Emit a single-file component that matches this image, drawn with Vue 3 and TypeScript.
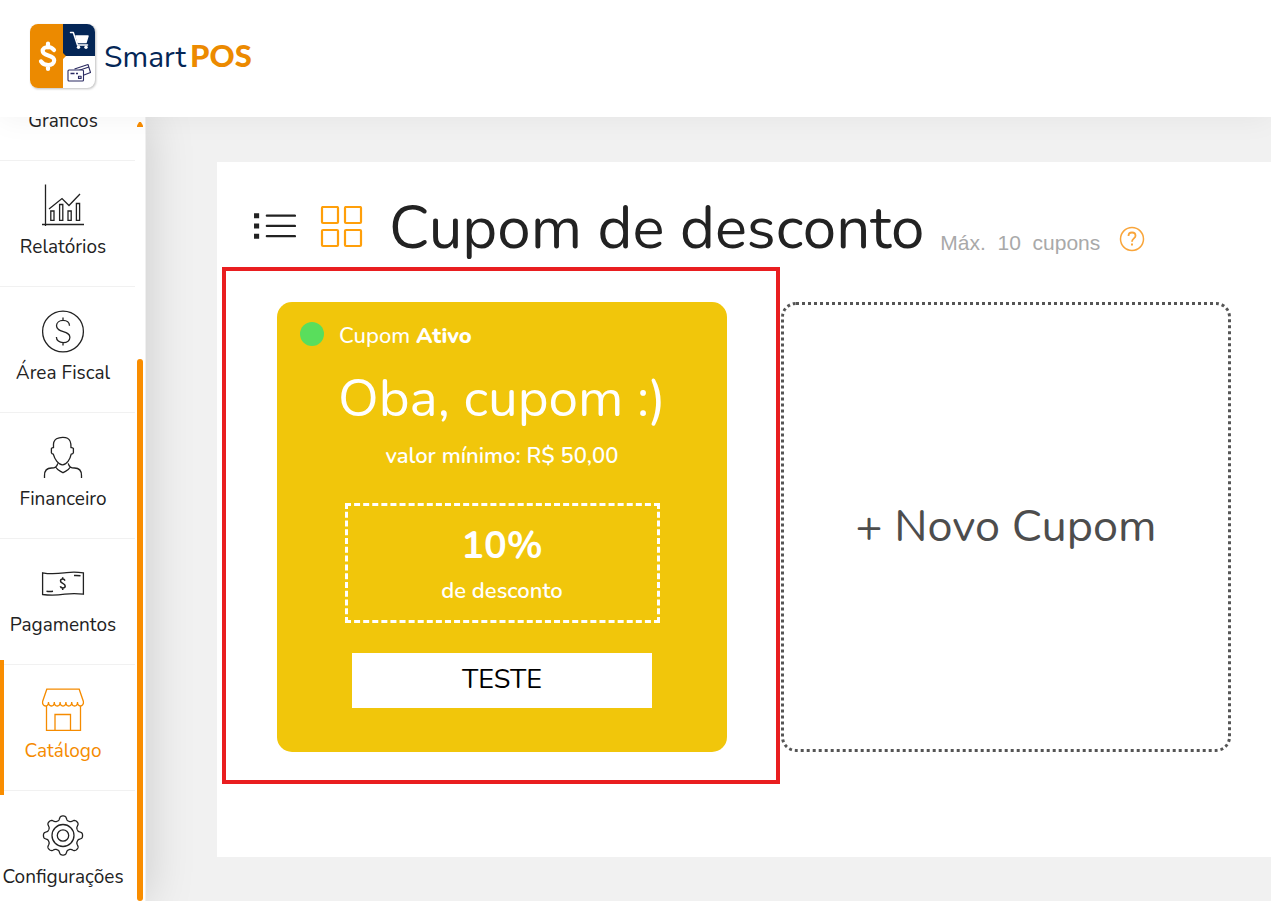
<script setup lang="ts">
import { ref } from 'vue'

interface MenuItem {
  id: string
  label: string
}

const menu: MenuItem[] = [
  { id: 'graficos', label: 'Gráficos' },
  { id: 'relatorios', label: 'Relatórios' },
  { id: 'fiscal', label: 'Área Fiscal' },
  { id: 'financeiro', label: 'Financeiro' },
  { id: 'pagamentos', label: 'Pagamentos' },
  { id: 'catalogo', label: 'Catálogo' },
  { id: 'config', label: 'Configurações' },
]

const active = ref('catalogo')
const view = ref<'list' | 'grid'>('grid')

const coupon = {
  title: 'Oba, cupom :)',
  minimum: 'valor mínimo: R$ 50,00',
  discount: '10%',
  code: 'TESTE',
}

// Eight rounded teeth around the centre of a 42-unit icon box.
function gearOutline(): string {
  const points: string[] = []
  for (let i = 0; i < 240; i++) {
    const a = (i / 240) * Math.PI * 2
    const r = 17.5 + 2.2 * Math.tanh(1.7 * Math.cos(8 * a))
    points.push(`${(21 + r * Math.cos(a)).toFixed(2)} ${(21.5 + r * Math.sin(a)).toFixed(2)}`)
  }
  return `M${points.join('L')}Z`
}
const gear = gearOutline()
</script>

<template>
  <div class="app">
    <header class="topbar">
      <a class="brand" href="#" aria-label="SmartPOS">
        <svg class="brand-mark" viewBox="0 0 66 66" aria-hidden="true">
          <defs>
            <clipPath id="mark"><rect width="65" height="64" rx="8" /></clipPath>
          </defs>
          <g clip-path="url(#mark)">
            <rect width="66" height="65" fill="#fff" />
            <rect x="33" width="33" height="32" fill="#042656" />
            <path d="M0 0h33v29l3 3-3 3v30H0z" fill="#ec8a00" />
          </g>
          <path d="M24 26c-1.500-2-3.800-3-6-3-3.200 0-5.300 1.600-5.300 4 0 5.600 11.500 3.200 11.500 9.300 0 2.900-2.500 4.700-6 4.700-3 0-5.700-1.200-7.200-3.600M18 19.500v4M18 41v4" fill="none" stroke="#fff" stroke-width="4.200" stroke-linecap="round" />
          <g fill="none" stroke="#fff" stroke-width="1.500" stroke-linecap="round" stroke-linejoin="round">
            <path d="M40.500 8.500h2.800l4.200 12.500h10" />
            <path d="M46 12h12l-2 6.500h-8z" fill="#fff" />
          </g>
          <circle cx="48.500" cy="23.300" r="1.700" fill="#fff" />
          <circle cx="56" cy="23.300" r="1.700" fill="#fff" />
          <g fill="none" stroke="#2b2b62" stroke-width="1.100" stroke-linejoin="round">
            <path d="M44.500 45l13.500-4.500 2.500 8-6.500 2.500" />
            <path d="M45.500 47.500l13.500-4.500" />
            <rect x="38" y="46" width="15.500" height="11" rx="1" fill="#fff" />
            <path d="M40.500 49.500h4M46 49.500h2" stroke-width="1.300" />
            <rect x="48.500" y="52.200" width="2.600" height="2.200" />
          </g>
        </svg>
        <span class="brand-name">Smart<b>POS</b></span>
      </a>
    </header>

    <div class="body">
      <aside class="sidebar">
        <nav class="menu" aria-label="Menu principal">
          <a
            v-for="item in menu"
            :key="item.id"
            href="#"
            class="menu-item"
            :class="{ active: item.id === active }"
            @click.prevent="active = item.id"
          >
            <svg class="menu-icon" viewBox="0 0 42 42" aria-hidden="true">
              <g v-if="item.id === 'graficos'">
                <circle cx="21" cy="21" r="20" />
                <path d="M21 1v20h20" />
              </g>
              <g v-else-if="item.id === 'relatorios'">
                <path d="M3.500 .5v41.500M0 40.500h42M7 25l13-10.500 7 7L38 10" />
                <path d="M8.800 27h3.200v9.300H8.800zM17.600 20.500h3.200v15.800h-3.200zM26 27h3.200v9.300H26zM34.400 19.500h3.200v16.800h-3.200z" />
              </g>
              <g v-else-if="item.id === 'fiscal'">
                <circle cx="21" cy="21.500" r="20.400" />
                <path d="M27.500 15.800c0-3.300-2.700-5.400-6.400-5.400s-6.600 2.200-6.600 5.400c0 7.400 13.400 4.200 13.400 11.400 0 3.300-2.800 5.400-6.700 5.400s-6.800-2.200-6.800-5.600M21 7.500v3M21 32.500v3" />
              </g>
              <g v-else-if="item.id === 'financeiro'">
                <path d="M11.500 11.500c-.5-5 .3-7.200 3-8.700 3.500-2 9-1.700 11-.6 3.200 1.700 3.700 4.600 3.500 9.300.9.200 2 .1 2.400 1v4.200c-.4 1-1.300 1.300-2.200 1.500-1 5-4.600 10.600-8.700 10.600S12.600 23.200 11.300 18.200c-.9-.2-1.500-.5-1.900-1.500v-4.200c.4-.9 1.200-.8 2.100-1z" />
                <path d="M2.500 42v-2.500c0-4.700 2.800-7.500 7-7.500 3.300 0 5.500-1.200 6.300-4.700M39.500 42v-2.500c0-4.700-2.800-7.500-7-7.500-3.300 0-5.500-1.200-6.300-4.700M14 31.500c1.500 2.800 4 3.300 7 5.200 3-1.900 5.500-2.400 7-5.200" />
              </g>
              <g v-else-if="item.id === 'pagamentos'">
                <path d="M.6 10.800c10 2 18 .5 24-.2 6-.7 12-.4 16.800.2v21.400c-7-1-13-.8-18.500 0-7 1-14 1.500-22.300.3z" />
                <path d="M23 18.600c-.4-1-1.200-1.500-2.300-1.500-1.300 0-2.200.7-2.200 1.900 0 2.800 4.700 1.900 4.700 4.900 0 1.300-1 2-2.400 2-1.200 0-2.200-.6-2.500-1.700M20.700 15.200v1.900M20.700 26v2M32 13.500c2-.2 4.500 0 6.500.3M4.500 29.300c2 .3 4.500.3 6.500 0" stroke-width="1.500" />
              </g>
              <g v-else-if="item.id === 'catalogo'">
                <path d="M4.800 1.200h32.400l4.200 12.300c.4 2.500-1 4.500-3 4.500-1.800 0-3-1.500-2.900-4 0 2.500-1 4-2.900 4s-2.900-1.500-2.900-4c0 2.500-1 4-2.900 4s-2.900-1.500-2.900-4c0 2.500-1 4-2.900 4s-2.900-1.500-2.900-4c0 2.500-1 4-2.900 4s-2.900-1.500-2.900-4c0 2.500-1 4-2.900 4s-2.900-1.500-2.900-4c0 2.500-1.200 4-3 4-2 0-3.300-2-2.900-4.500z" />
                <path d="M4.500 18v24.300h34V18M13 42V26.500h15.500V42" />
              </g>
              <g v-else>
                <path :d="gear" />
                <circle cx="21" cy="21.500" r="11" />
                <circle cx="21" cy="21.500" r="5.700" />
              </g>
            </svg>
            <span class="menu-label">{{ item.label }}</span>
          </a>
        </nav>
        <div class="scrollbar" aria-hidden="true">
          <span class="scroll-up"></span>
          <span class="scroll-thumb"></span>
        </div>
      </aside>

      <main class="content">
        <section class="panel">
          <div class="heading">
            <button type="button" class="view-button" aria-label="Ver em lista" @click="view = 'list'">
              <svg viewBox="0 0 42 42" aria-hidden="true">
                <path d="M1 7h5v5H1zM1 17h5v5H1zM1 27h5v5H1z" fill="#222" />
                <path d="M13.500 9.500h27.500M13.500 19.500h27.500M13.500 29.500h27.500" fill="none" stroke="#222" stroke-width="2.200" stroke-linecap="round" />
              </svg>
            </button>
            <button type="button" class="view-button" aria-label="Ver em grade" @click="view = 'grid'">
              <svg viewBox="0 0 43 43" aria-hidden="true">
                <g fill="none" stroke="#ff9f0a" stroke-width="2.200">
                  <rect x="2" y="1" width="16" height="16" rx="1" />
                  <rect x="25" y="1" width="16" height="16" rx="1" />
                  <rect x="2" y="24" width="16" height="16" rx="1" />
                  <rect x="25" y="24" width="16" height="16" rx="1" />
                </g>
              </svg>
            </button>
            <h1>Cupom de desconto</h1>
            <span class="limit">Máx.&nbsp; 10&nbsp; cupons</span>
            <button type="button" class="help" aria-label="Ajuda">
              <svg viewBox="0 0 26 26" aria-hidden="true">
                <circle cx="13" cy="13" r="11.500" />
                <path d="M9.500 10c0-2.200 1.500-3.500 3.500-3.500s3.500 1.300 3.500 3.200c0 2.600-3.500 2.800-3.500 6" stroke-width="1.800" />
                <path d="M13 17.500v2" stroke-width="2" />
              </svg>
            </button>
          </div>

          <div class="cards">
            <article class="coupon">
              <p class="status"><span class="dot"></span><span>Cupom <b>Ativo</b></span></p>
              <h2>{{ coupon.title }}</h2>
              <p class="minimum">{{ coupon.minimum }}</p>
              <div class="discount">
                <strong>{{ coupon.discount }}</strong>
                <span>de desconto</span>
              </div>
              <div class="code">{{ coupon.code }}</div>
            </article>
            <button type="button" class="new-coupon">+ Novo Cupom</button>
          </div>
        </section>
      </main>
    </div>
  </div>
</template>

<style>
body {
  margin: 0;
}
</style>

<style scoped>
.app {
  display: flex;
  flex-direction: column;
  height: 100vh;
  overflow: hidden;
  background: #f1f1f1;
  color: #222;
  font-family: Nunito, Lato, sans-serif;
}

h1,
h2,
p {
  margin: 0;
  font-weight: 400;
}

button {
  padding: 0;
  border: 0;
  background: none;
  font-family: inherit;
  cursor: pointer;
}

.topbar {
  position: relative;
  z-index: 2;
  display: flex;
  flex: none;
  height: 117px;
  box-sizing: border-box;
  padding: 24px 30px;
  background: #fff;
  box-shadow: 0 0 30px rgba(0, 0, 0, 0.06);
}

.brand {
  display: flex;
  align-items: center;
  gap: 8px;
  height: 65px;
  color: #042656;
  text-decoration: none;
}

.brand-mark {
  width: 66px;
  height: 66px;
  filter: drop-shadow(1px 1px 1px rgba(0, 0, 0, 0.25));
}

.brand-name {
  display: flex;
  align-items: baseline;
  gap: 4px;
  font-size: 30px;
  line-height: 40px;
}

.brand-name b {
  color: #ec8a00;
  font-family: Lato, sans-serif;
  font-size: 31px;
  font-weight: 900;
}

.body {
  display: flex;
  flex: 1;
  min-height: 0;
}

.sidebar {
  position: relative;
  z-index: 1;
  display: flex;
  flex: none;
  width: 145px;
  border-right: 1px solid #f0f0f0;
  background: #fff;
  box-shadow: 0 0 45px rgba(0, 0, 0, 0.17);
}

.menu {
  flex: 1;
  overflow: hidden;
}

.menu-item {
  position: relative;
  display: flex;
  flex-direction: column;
  align-items: center;
  height: 125px;
  box-sizing: content-box;
  padding-right: 9px;
  border-bottom: 1px solid #f1f1f1;
  color: #222;
  text-decoration: none;
}

/* The list is scrolled part of the way past its first entry. */
.menu-item:first-child {
  margin-top: -82px;
}

.menu-icon {
  width: 42px;
  height: 42px;
  margin: 23px 0 9px;
  overflow: visible;
  fill: none;
  stroke: currentColor;
  stroke-width: 1.3;
}

.menu-label {
  font-size: 19px;
  line-height: 24px;
  white-space: nowrap;
}

.menu-item.active {
  color: #f58b00;
}

.menu-item.active::before {
  content: '';
  position: absolute;
  top: -5px;
  bottom: -5px;
  left: 0;
  width: 4px;
  background: #f98d00;
}

.scrollbar {
  display: flex;
  flex-direction: column;
  width: 6px;
  margin: 5px 2px 0;
}

.scroll-up {
  height: 5px;
  background: #f98d00;
  clip-path: polygon(35% 0, 65% 0, 100% 70%, 100% 100%, 0 100%, 0 70%);
}

.scroll-thumb {
  height: 542px;
  margin-top: auto;
  border-radius: 3px;
  background: #f98d00;
}

.content {
  flex: 1;
  min-width: 0;
  padding: 45px 0 44px 71px;
}

.panel {
  height: 100%;
  box-sizing: border-box;
  padding: 16px 40px 0 60px;
  background: #fff;
}

.heading {
  display: flex;
  align-items: center;
  margin-left: -24px;
  line-height: 100px;
  white-space: nowrap;
}

.view-button {
  width: 43px;
  height: 43px;
  margin: -2px 24px 0 0;
}

.view-button svg {
  display: block;
  width: 43px;
  height: 43px;
}

.heading h1 {
  margin-left: 2px;
  font-size: 60px;
}

.limit {
  margin: 30px 0 0 16px;
  color: #a9a9a9;
  font: 21px/24px 'Liberation Sans', Arial, sans-serif;
}

.help {
  width: 26px;
  height: 26px;
  margin: 22px 0 0 19px;
}

.help svg {
  display: block;
  fill: none;
  stroke: #f9a53a;
  stroke-width: 1.5;
}

.cards {
  display: grid;
  grid-template-columns: repeat(auto-fit, minmax(400px, 1fr));
  gap: 54px;
  margin-top: 24px;
}

.coupon {
  position: relative;
  display: flex;
  flex-direction: column;
  align-items: center;
  height: 450px;
  box-sizing: border-box;
  padding: 18px 23px 0;
  border-radius: 15px;
  background: #f1c60b;
  color: #fff;
  font-size: 22px;
  line-height: 32px;
}

.coupon p,
.coupon span {
  font-weight: 600;
}

.coupon b {
  font-weight: 800;
}

.coupon::after {
  content: '';
  position: absolute;
  inset: -35px -53px -32px -55px;
  border: 4px solid #e91e20;
  pointer-events: none;
}

.status {
  display: flex;
  align-items: flex-start;
  align-self: stretch;
  gap: 15px;
}

.dot {
  width: 24px;
  height: 24px;
  margin-top: 2px;
  border-radius: 50%;
  background: #59de5c;
}

.coupon .status span {
  font-weight: 500;
}

.coupon h2 {
  margin-top: 15px;
  font-size: 53px;
  line-height: 64px;
}

.minimum {
  margin-top: 9px;
}

.discount {
  display: flex;
  flex-direction: column;
  align-items: center;
  width: 315px;
  height: 120px;
  box-sizing: border-box;
  margin-top: 31px;
  padding-top: 17px;
  border: 3px dashed #fff;
}

.discount strong {
  margin-bottom: 6px;
  font-size: 38px;
  line-height: 46px;
}

.code {
  width: 300px;
  height: 55px;
  margin-top: 30px;
  background: #fff;
  color: #000;
  font-size: 27px;
  line-height: 54px;
  text-align: center;
}

.new-coupon {
  height: 450px;
  padding-bottom: 2px;
  border: 3px dotted #555;
  border-radius: 15px;
  color: #4d4d4d;
  font-size: 45px;
}
</style>
